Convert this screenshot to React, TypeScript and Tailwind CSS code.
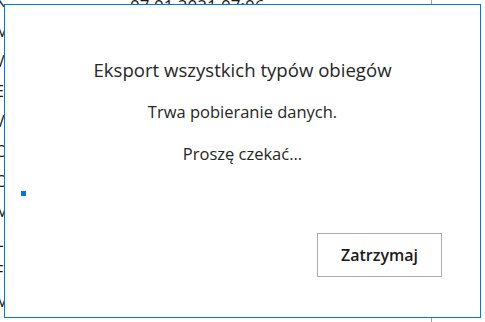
import React from 'react';

const rowLetters = ['K', 'M', 'V', 'E', 'V', 'C', 'C', 'M', 'L', 'F', 'M'];

export default function App() {
  return (
    <div
      className="relative w-[485px] h-[322px] overflow-hidden bg-white text-[#1a1a1a]"
      style={{ fontFamily: '"Segoe UI", "Open Sans", "Noto Sans", sans-serif' }}
    >
      {/* Background list behind the dialog */}
      <div className="flex flex-col mt-[-14px]">
        {rowLetters.map((ch, i) => (
          <div key={i} className="relative h-[30px] flex items-center text-[16px]">
            <span className="ml-[-5px]">{ch}</span>
            {i === 0 && <span className="absolute left-[130px] top-[7px] text-[17px]">07.01.2021 07:06</span>}
          </div>
        ))}
      </div>
      <div className="absolute left-[431px] top-0 w-px h-full bg-[#a0a0a0]" />

      {/* Dialog */}
      <div className="absolute left-[4px] top-[4px] w-[477px] h-[314px] bg-white border border-[#0078d7] flex flex-col">
        <div className="flex flex-col items-center pt-[52px]">
          <div className="text-[18.6px] leading-[26px] text-[#262626]">Eksport wszystkich typów obiegów</div>
          <div className="text-[16.5px] leading-[22px] mt-[18px] text-[#262626]">Trwa pobieranie danych.</div>
          <div className="text-[16.5px] leading-[22px] mt-[20px] text-[#262626]">Proszę czekać...</div>
        </div>
        <div className="mt-[26px] pl-[16px]">
          <div className="w-[5px] h-[5px] bg-[#0078d7]" />
        </div>
        <div className="flex justify-end pr-[38px] mt-[37px]">
          <button className="w-[125px] h-[44px] border border-[#adadad] bg-white text-[16px] font-semibold text-[#1a1a1a]">
            Zatrzymaj
          </button>
        </div>
      </div>
    </div>
  );
}
